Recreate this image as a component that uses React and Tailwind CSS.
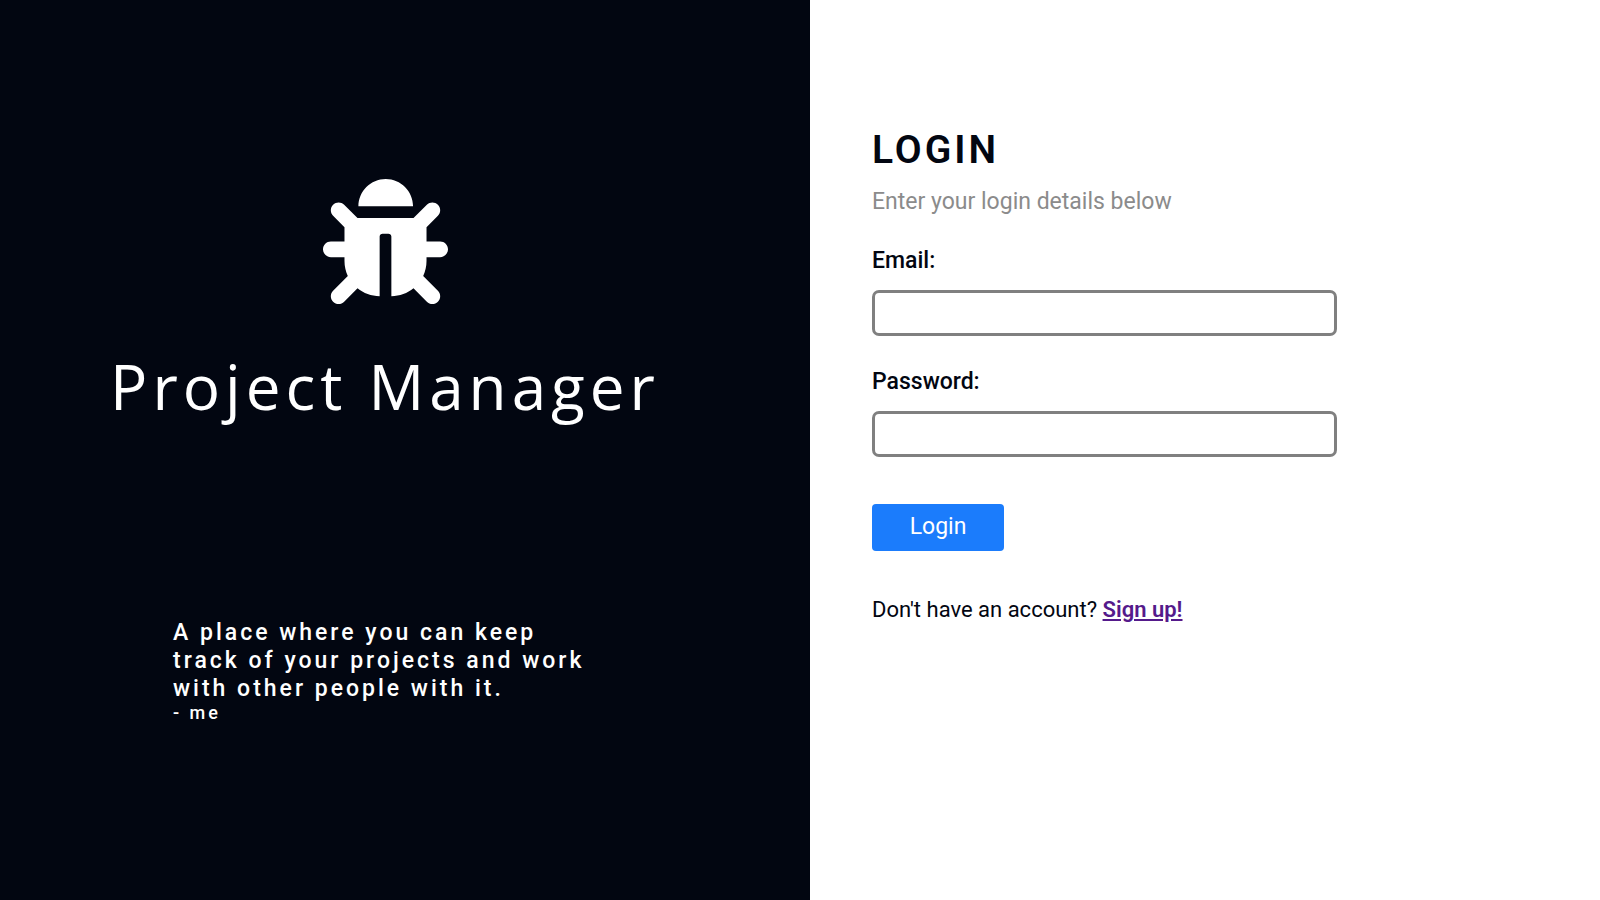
import { FaBug } from 'react-icons/fa';

function Hero() {
  return (
    <section className="flex flex-col items-center bg-[#020611] pt-[179px] pr-10 pb-10 text-white">
      <FaBug className="h-[125px] w-[125px]" aria-hidden="true" />
      <h1 className="mt-[42px] font-['Open_Sans',sans-serif] text-[62px] font-medium leading-[80px] tracking-[5px]">
        Project Manager
      </h1>
      <div className="mt-[193px] w-[424px] font-medium tracking-[3px]">
        <p className="text-[23px] leading-7">
          A place where you can keep track of your projects and work with other people with it.
        </p>
        <p className="text-lg leading-5">- me</p>
      </div>
    </section>
  );
}

function Field({ id, label, type }) {
  return (
    <div className="flex flex-col gap-[15px]">
      <label htmlFor={id} className="font-medium leading-7">{label}</label>
      <input
        id={id}
        type={type}
        className="h-[46px] w-full rounded-[7px] border-[3px] border-[#808080] bg-white px-3"
      />
    </div>
  );
}

function LoginForm() {
  return (
    <section className="bg-white px-[62px] pt-32 text-[23px] text-[#020611]">
      <form className="w-full max-w-[465px]" onSubmit={(e) => e.preventDefault()}>
        <h2 className="text-[39px] font-semibold leading-[44px] tracking-[3px]">LOGIN</h2>
        <p className="mt-4 leading-7 text-[#8b8b8b]">Enter your login details below</p>
        <div className="mt-[31px] flex flex-col gap-8">
          <Field id="email" label="Email:" type="email" />
          <Field id="password" label="Password:" type="password" />
        </div>
        <button
          type="submit"
          className="mt-[47px] h-[47px] w-[132px] rounded bg-[#1b7cfc] text-white"
        >
          Login
        </button>
        <p className="mt-[45px] text-[22px] leading-7">
          Don&apos;t have an account?{' '}
          <a href="#signup" className="font-semibold text-[#551a8b] underline">Sign up!</a>
        </p>
      </form>
    </section>
  );
}

export default function App() {
  return (
    <main className="grid min-h-screen grid-cols-[81fr_79fr] font-[Roboto,sans-serif]">
      <Hero />
      <LoginForm />
    </main>
  );
}
